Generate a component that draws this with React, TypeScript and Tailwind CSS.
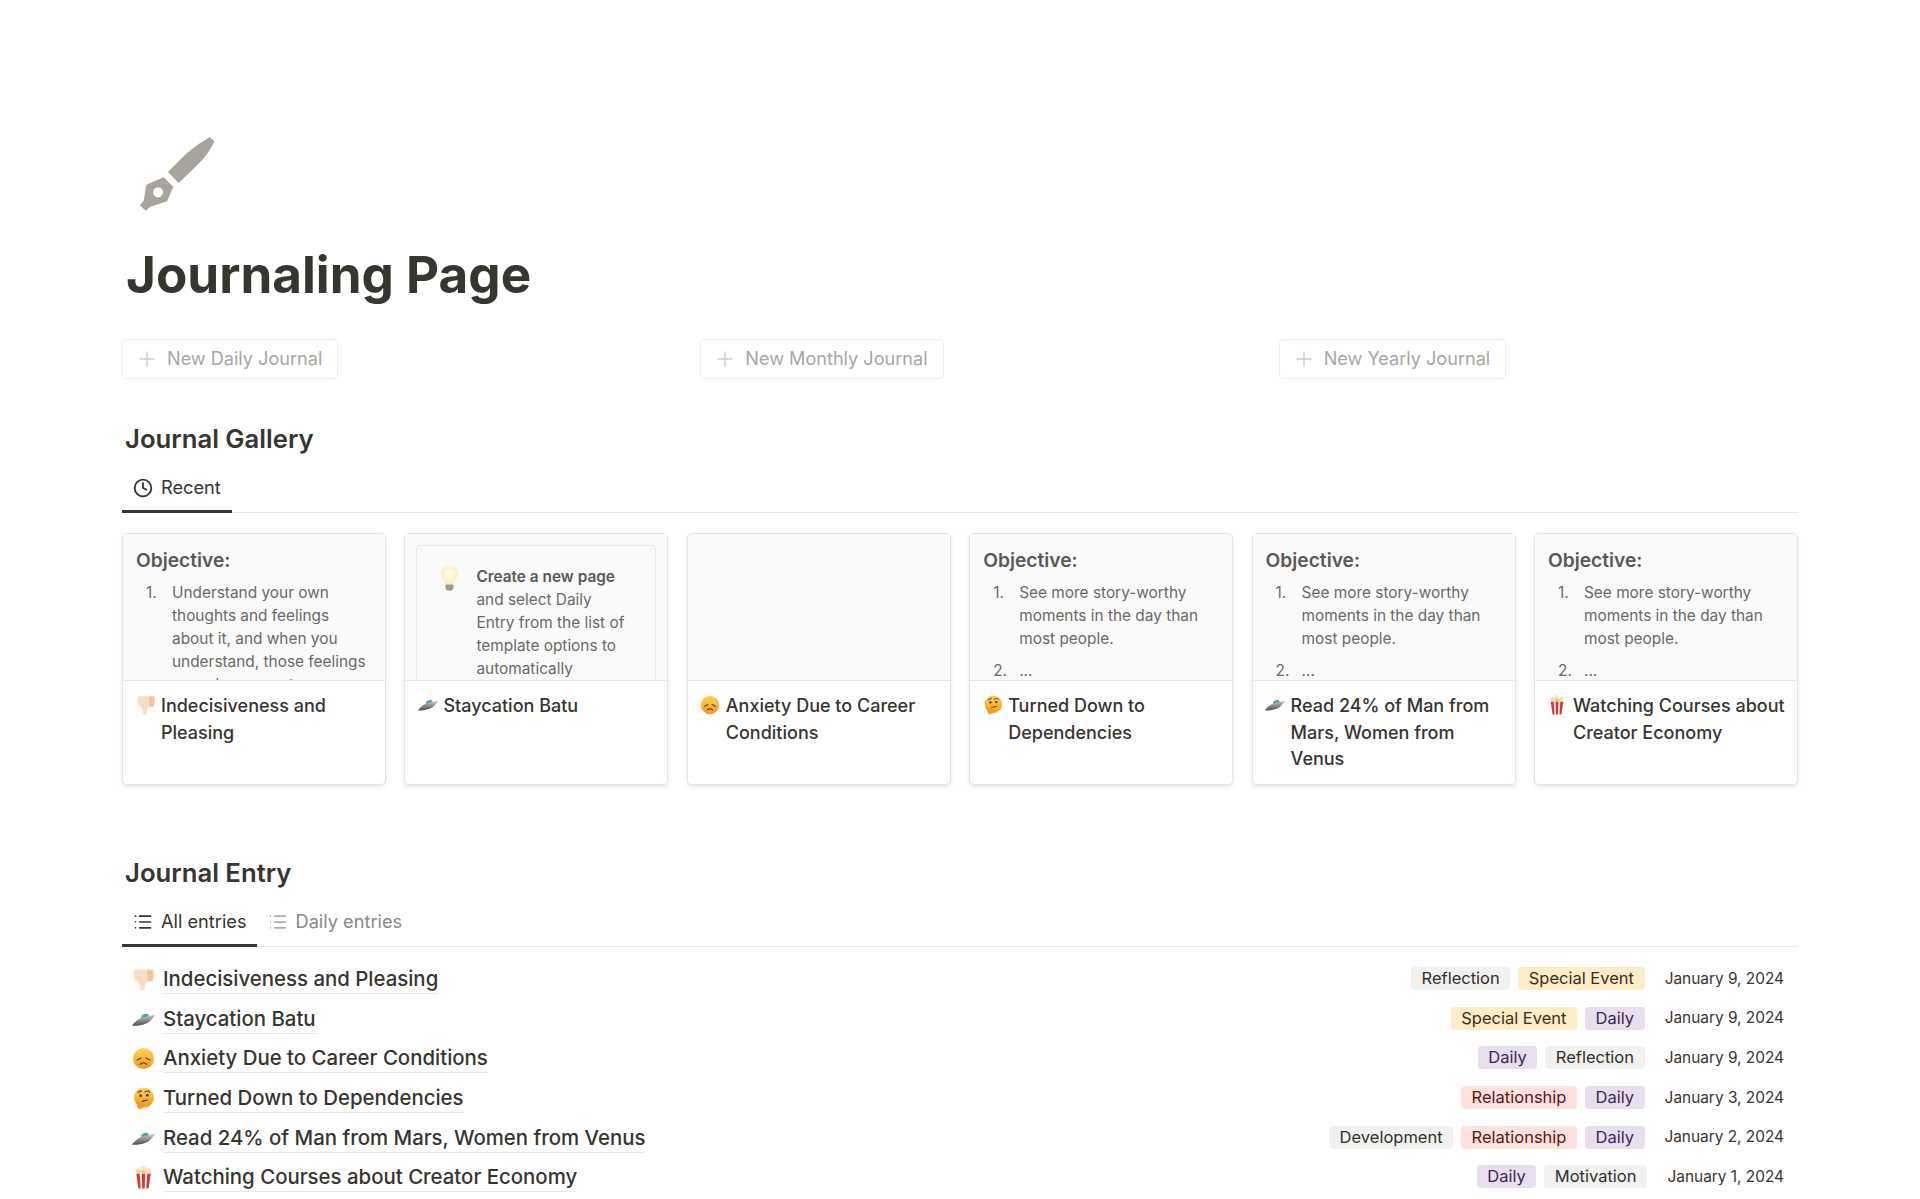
import React from 'react';
import { Clock, List, Plus } from 'lucide-react';

const ThumbsDown = () => (
  <svg viewBox="0 0 24 24" className="w-full h-full">
    <path d="M3 1.500h9.500c1 0 2 .4 3 .8l2 .7.500 10.500-3 1.500c-1.200 1-1.500 2.500-1.700 4.500-.2 2.500-1.200 4-2.800 4-1.400 0-2-1.200-2-3 0-2.500-.6-4-2-5.500L3.500 12.500C2.500 11 2 9 2 6.500S2 1.500 3 1.500z" fill="#f8dcc3" />
    <path d="M15.500 1.500h5c1.300 0 2 .7 2 1.700s-.5 1.500-1 1.700c.7.300 1.200 1 1.200 1.800s-.5 1.500-1 1.700c.6.300 1 1 1 1.700s-.5 1.400-1.200 1.600c.3.400.3 1 .1 1.400-.3.600-1 .9-1.800.9h-3.300z" fill="#f3c9a5" />
    <path d="M16 5h5.300M16 8.500h5.500M16 11.800h5" stroke="#dca67c" strokeWidth=".5" />
  </svg>
);

const Saucer = () => (
  <svg viewBox="0 0 24 24" className="w-full h-full">
    <defs>
      <linearGradient id="saucer-body" x1="0" y1="0" x2="0" y2="1">
        <stop offset="0" stopColor="#c9ced2" />
        <stop offset="1" stopColor="#4b4f55" />
      </linearGradient>
    </defs>
    <path d="M9.500 9.500c.5-2 2.500-3.500 5-3.500 1.500 0 2.500.6 3 1.500l-.5 3.500-7 1z" fill="#3fa9a5" />
    <path d="M0 18.500c2-2.800 6-7 9.500-8 3-1 9-2.500 14.500-3.500-1.500 2.800-4 6-7 8-3.500 2.200-11 3.800-17 3.500z" fill="url(#saucer-body)" />
  </svg>
);

const SadFace = () => (
  <svg viewBox="0 0 24 24" className="w-full h-full">
    <defs>
      <linearGradient id="face-fill" x1="0" y1="0" x2="0" y2="1">
        <stop offset="0" stopColor="#fcd35b" />
        <stop offset="1" stopColor="#f39a1c" />
      </linearGradient>
    </defs>
    <circle cx="12" cy="12" r="11" fill="url(#face-fill)" />
    <path d="M5.500 13.500l3.900-2M18.500 13.500l-3.900-2M8.700 18c1.500-1.800 5-1.800 6.600 0" stroke="#6b3f10" strokeWidth="1.300" fill="none" strokeLinecap="round" />
  </svg>
);

const ThinkingFace = () => (
  <svg viewBox="0 0 24 24" className="w-full h-full">
    <defs>
      <linearGradient id="think-fill" x1="0" y1="0" x2="0" y2="1">
        <stop offset="0" stopColor="#fcd35b" />
        <stop offset="1" stopColor="#f39a1c" />
      </linearGradient>
    </defs>
    <circle cx="12.500" cy="11" r="10.500" fill="url(#think-fill)" />
    <circle cx="9" cy="9" r="1.400" fill="#5a3510" />
    <circle cx="16" cy="8.500" r="1.400" fill="#5a3510" />
    <path d="M6.500 5.500l3.500-1.500M13.500 5l3.500-1 1.500 1.500M10.500 15l5.500-1.500" stroke="#5a3510" strokeWidth="1.100" fill="none" strokeLinecap="round" />
    <path d="M5 14.500c.8-.9 1.800-.5 2.200.5l.8 1.500 5 .2c1 .1 1.200 1.600.1 1.800l-1.300.2c.8.900.5 2-.3 2.800-1.300 1.500-3.500 2.200-4.800 1-1.500-1.400-2.300-5-1.700-8z" fill="#f09c1f" />
  </svg>
);

const Popcorn = () => (
  <svg viewBox="0 0 24 24" className="w-full h-full">
    <circle cx="7" cy="5.500" r="3" fill="#f3dfae" />
    <circle cx="12" cy="3.200" r="3.200" fill="#f8e8c0" />
    <circle cx="17" cy="5.500" r="3" fill="#f3dfae" />
    <circle cx="12" cy="6.500" r="2.500" fill="#e8cc8a" />
    <path d="M4.500 8h15l-2.200 15.500H6.700z" fill="#f4f1ee" />
    <path d="M4.500 8h3.500l1 15.500H6.700zM10.300 8h3.400l-.5 15.500h-2.400zM16 8h3.500l-2.200 15.500H15z" fill="#d9352f" />
  </svg>
);

const Bulb = () => (
  <svg viewBox="0 0 24 34" className="w-full h-full">
    <defs>
      <radialGradient id="bulb-fill" cx="0.5" cy="0.4" r="0.6">
        <stop offset="0" stopColor="#fffef5" />
        <stop offset="1" stopColor="#fbedb4" />
      </radialGradient>
    </defs>
    <path d="M12 1C5.500 1 1 5.500 1 11c0 5 4.500 8 5.500 13.500h11C18.500 19 23 16 23 11 23 5.500 18.500 1 12 1z" fill="url(#bulb-fill)" />
    <path d="M7 24.500h10v5l-2.500 3h-5L7 29.500z" fill="#9b9a99" />
  </svg>
);

const emojis: Record<string, React.FC> = {
  down: ThumbsDown,
  saucer: Saucer,
  sad: SadFace,
  think: ThinkingFace,
  popcorn: Popcorn,
};

const PenIcon = () => (
  <svg viewBox="110 70 240 240" className="w-20 h-20 ml-[15px] block">
    <path d="M328 82L342 95C330 122 310 150 285 172L235 220L203 187L250 140C275 115 300 100 328 82Z" fill="#a8a49b" />
    <path
      fillRule="evenodd"
      d="M190 203L219 231L200 275L150 291L136 303L119 287L130 273L138 225ZM173 233a15 15 0 1 0 .01 0Z"
      fill="#a8a49b"
    />
  </svg>
);

const tagStyles: Record<string, string> = {
  Reflection: 'bg-[#f1f1ef] text-[#32302c]',
  Development: 'bg-[#f1f1ef] text-[#32302c]',
  Motivation: 'bg-[#f1f1ef] text-[#32302c]',
  'Special Event': 'bg-[#fdecc8] text-[#402c1b]',
  Daily: 'bg-[#e8deee] text-[#412454]',
  Relationship: 'bg-[#ffe2dd] text-[#5d1715]',
};

const storyItems = ['See more story-worthy moments in the day than most people.', '...'];

const cards = [
  { emoji: 'down', title: 'Indecisiveness and Pleasing', preview: 'understand' },
  { emoji: 'saucer', title: 'Staycation Batu', preview: 'callout' },
  { emoji: 'sad', title: 'Anxiety Due to Career Conditions', preview: 'empty' },
  { emoji: 'think', title: 'Turned Down to Dependencies', preview: 'story' },
  { emoji: 'saucer', title: 'Read 24% of Man from Mars, Women from Venus', preview: 'story' },
  { emoji: 'popcorn', title: 'Watching Courses about Creator Economy', preview: 'story' },
];

const entries = [
  { emoji: 'down', title: 'Indecisiveness and Pleasing', tags: ['Reflection', 'Special Event'], date: 'January 9, 2024' },
  { emoji: 'saucer', title: 'Staycation Batu', tags: ['Special Event', 'Daily'], date: 'January 9, 2024' },
  { emoji: 'sad', title: 'Anxiety Due to Career Conditions', tags: ['Daily', 'Reflection'], date: 'January 9, 2024' },
  { emoji: 'think', title: 'Turned Down to Dependencies', tags: ['Relationship', 'Daily'], date: 'January 3, 2024' },
  { emoji: 'saucer', title: 'Read 24% of Man from Mars, Women from Venus', tags: ['Development', 'Relationship', 'Daily'], date: 'January 2, 2024' },
  { emoji: 'popcorn', title: 'Watching Courses about Creator Economy', tags: ['Daily', 'Motivation'], date: 'January 1, 2024' },
];

const Objective = ({ items }: { items: string[] }) => (
  <div className="px-[13px] pt-[12px]">
    <div className="text-[19.2px] leading-[28px] font-semibold text-[#5a5955]">Objective:</div>
    <ol className="mt-[7px] text-[15.4px] leading-[23px] text-[#6b6a66]">
      {items.map((item, i) => (
        <li key={i} className="flex mb-[9px]">
          <span className="w-[36px] pl-[10px] shrink-0">{i + 1}.</span>
          <span className="w-[197px]">{item}</span>
        </li>
      ))}
    </ol>
  </div>
);

const Callout = () => (
  <div className="mx-[11px] mt-[11px] h-[200px] border border-[#e9e9e7] rounded-[4px] flex pl-[23px] pt-[19px]">
    <span className="w-[19px] h-[27px] shrink-0 mr-[17px]">
      <Bulb />
    </span>
    <p className="w-[152px] text-[15.4px] leading-[23px] text-[#6b6a66]">
      <strong className="font-semibold text-[#5a5955]">Create a new page</strong> and select Daily Entry from the list of template options to automatically
    </p>
  </div>
);

const GalleryCard = ({ card }: { card: (typeof cards)[number] }) => {
  const Emoji = emojis[card.emoji];
  return (
    <div className="h-[252px] rounded-[5px] overflow-hidden bg-white border border-[#e3e3e2] shadow-[0_2px_4px_rgba(15,15,15,0.1)]">
      <div className="h-[147px] bg-[#fafafa] overflow-hidden border-b border-[#e9e9e7]">
        {card.preview === 'understand' && (
          <Objective items={['Understand your own thoughts and feelings about it, and when you understand, those feelings may also cease to']} />
        )}
        {card.preview === 'story' && <Objective items={storyItems} />}
        {card.preview === 'callout' && <Callout />}
      </div>
      <div className="flex pl-[12.500px] pr-[9px] pt-[12px] text-[18px] leading-[26.5px] font-medium text-[#37352f]">
        <span className="w-[20px] h-[20px] mt-[2px] mr-[5.500px] shrink-0">
          <Emoji />
        </span>
        <span>{card.title}</span>
      </div>
    </div>
  );
};

const EntryRow = ({ entry, last }: { entry: (typeof entries)[number]; last: boolean }) => {
  const Emoji = emojis[entry.emoji];
  return (
    <div className="flex items-center h-[39.6px]">
      <span className="w-[23px] h-[23px] ml-[10px] mr-[8px] shrink-0">
        <Emoji />
      </span>
      <span className="text-[20.4px] leading-[28px] font-medium border-b border-[#e9e9e7] text-[#37352f]">{entry.title}</span>
      <div className="ml-auto mb-[2px] flex gap-[8px]">
        {entry.tags.map((tag) => (
          <span key={tag} className={`h-[23px] px-[10.500px] rounded-[4px] text-[16.5px] leading-[23px] whitespace-nowrap ${tagStyles[tag]}`}>
            {tag}
          </span>
        ))}
      </div>
      <span className={`${last ? 'w-[151px]' : 'w-[153.500px]'} mb-[3px] pr-[14px] text-right text-[15.4px] text-[#37352f] whitespace-nowrap`}>{entry.date}</span>
    </div>
  );
};

const App = () => {
  return (
    <div className="w-[1920px] h-[1199px] overflow-hidden bg-white px-[122px] pt-[133px] text-[#37352f] font-['Inter',sans-serif]">
      <PenIcon />
      <h1 className="mt-[29px] ml-[4px] mb-[33px] text-[51.200px] leading-[64px] font-bold text-[#37352f]">Journaling Page</h1>

      <div className="grid grid-cols-3 gap-[59px]">
        {['New Daily Journal', 'New Monthly Journal', 'New Yearly Journal'].map((label) => (
          <div key={label}>
            <div className="inline-flex items-center h-[40px] pl-[12px] pr-[15px] gap-[8px] border border-[#efefee] rounded-[4px] text-[18.1px] text-[#a8a7a4]">
              <Plus size={24} strokeWidth={1.4} className="text-[#cfcecb]" />
              {label}
            </div>
          </div>
        ))}
      </div>

      <h2 className="mt-[43px] ml-[3px] text-[25.7px] leading-[34px] font-semibold">Journal Gallery</h2>
      <div className="mt-[10px] flex border-b border-[#e9e9e7] h-[47px]">
        <div className="flex items-center gap-[8px] px-[11px] h-[47px] border-b-[3px] border-[#37352f] text-[18.2px]">
          <Clock size={20} strokeWidth={2.200} />
          Recent
        </div>
      </div>

      <div className="mt-[20px] grid grid-cols-6 gap-[18.400px]">
        {cards.map((card) => (
          <GalleryCard key={card.title} card={card} />
        ))}
      </div>

      <h2 className="mt-[71px] ml-[3px] text-[25.7px] leading-[34px] font-semibold">Journal Entry</h2>
      <div className="mt-[10px] flex border-b border-[#e9e9e7] h-[47px]">
        <div className="flex items-center gap-[8px] pl-[11px] pr-[10.500px] h-[47px] border-b-[3px] border-[#37352f] text-[18.2px]">
          <List size={20} strokeWidth={2} />
          All entries
        </div>
        <div className="flex items-center gap-[8px] pl-[10.500px] pr-[11px] h-[47px] border-b-[3px] border-transparent text-[18.2px] text-[#8b8a86]">
          <List size={20} strokeWidth={1.500} />
          Daily entries
        </div>
      </div>

      <div className="mt-[13px]">
        {entries.map((entry, i) => (
          <EntryRow key={entry.title} entry={entry} last={i === entries.length - 1} />
        ))}
      </div>
    </div>
  );
};

export default App;
